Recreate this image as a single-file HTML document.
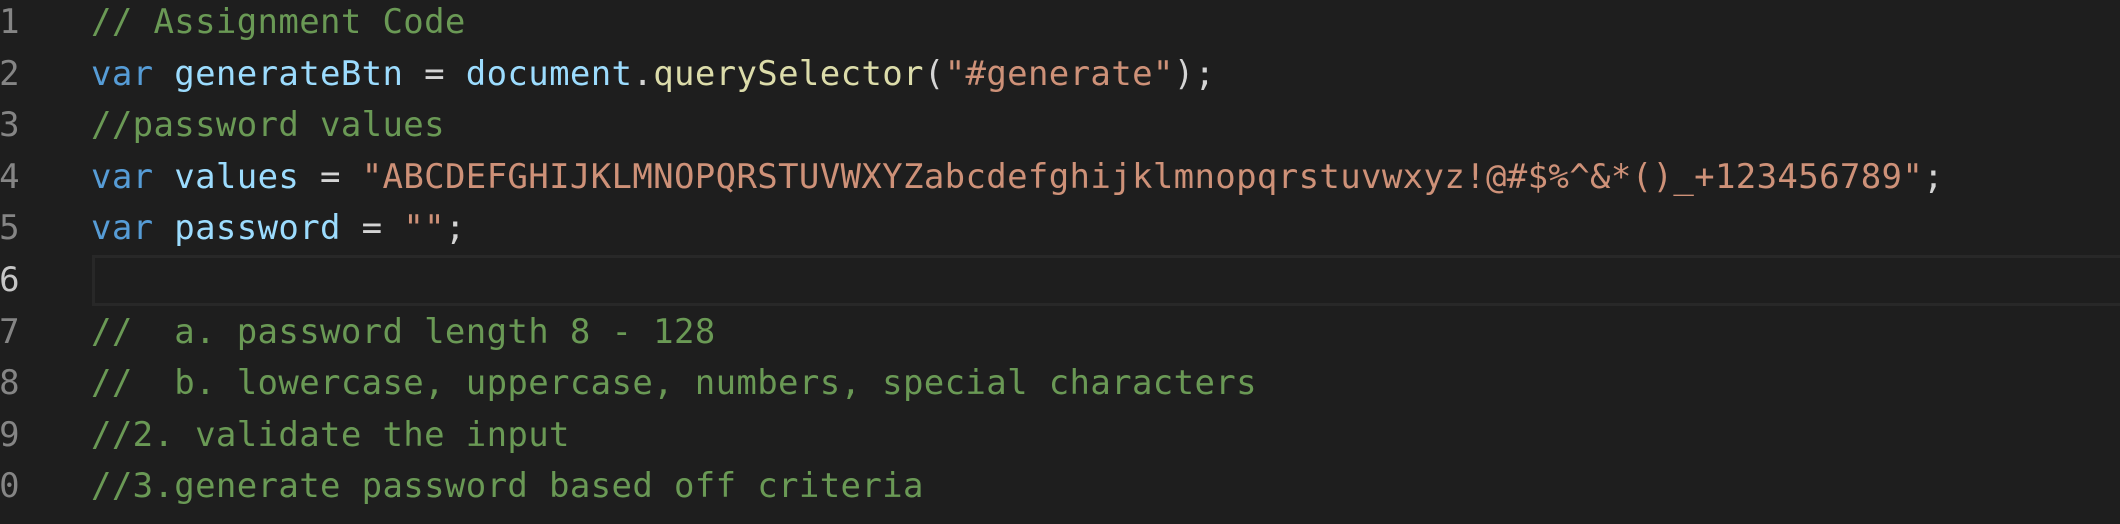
<!DOCTYPE html>
<html><head><style>
html,body{margin:0;padding:0;background:#1e1e1e;width:2120px;height:524px;overflow:hidden}
.wrap{position:absolute;top:-3px;left:0;width:2120px;font-family:"DejaVu Sans Mono","Liberation Mono",monospace;font-size:34px;letter-spacing:0.35px}
.l{height:51.6px;line-height:51.6px;white-space:pre;position:relative;width:2120px}
.n{position:absolute;left:-60px;width:80px;text-align:right;color:#858585}
.t{position:absolute;left:91px;color:#d4d4d4}
.cur{position:absolute;left:92px;width:2040px;top:0px;height:51px;border:3px solid #282828;border-right:none;box-sizing:border-box}
.c{color:#6a9955}.k{color:#569cd6}.v{color:#9cdcfe}.f{color:#dcdcaa}.s{color:#ce9178}
</style></head><body><div class="wrap">
<div class="l"><span class="n">1</span><span class="t"><span class="c">// Assignment Code</span></span></div>
<div class="l"><span class="n">2</span><span class="t"><span class="k">var</span> <span class="v">generateBtn</span> = <span class="v">document</span>.<span class="f">querySelector</span>(<span class="s">"#generate"</span>);</span></div>
<div class="l"><span class="n">3</span><span class="t"><span class="c">//password values</span></span></div>
<div class="l"><span class="n">4</span><span class="t"><span class="k">var</span> <span class="v">values</span> = <span class="s">"ABCDEFGHIJKLMNOPQRSTUVWXYZabcdefghijklmnopqrstuvwxyz!@#$%^&amp;*()_+123456789"</span>;</span></div>
<div class="l"><span class="n">5</span><span class="t"><span class="k">var</span> <span class="v">password</span> = <span class="s">""</span>;</span></div>
<div class="l"><div class="cur"></div><span class="n" style="color:#c6c6c6">6</span></div>
<div class="l"><span class="n">7</span><span class="t"><span class="c">//  a. password length 8 - 128</span></span></div>
<div class="l"><span class="n">8</span><span class="t"><span class="c">//  b. lowercase, uppercase, numbers, special characters</span></span></div>
<div class="l"><span class="n">9</span><span class="t"><span class="c">//2. validate the input</span></span></div>
<div class="l"><span class="n">10</span><span class="t"><span class="c">//3.generate password based off criteria</span></span></div>
</div></body></html>
